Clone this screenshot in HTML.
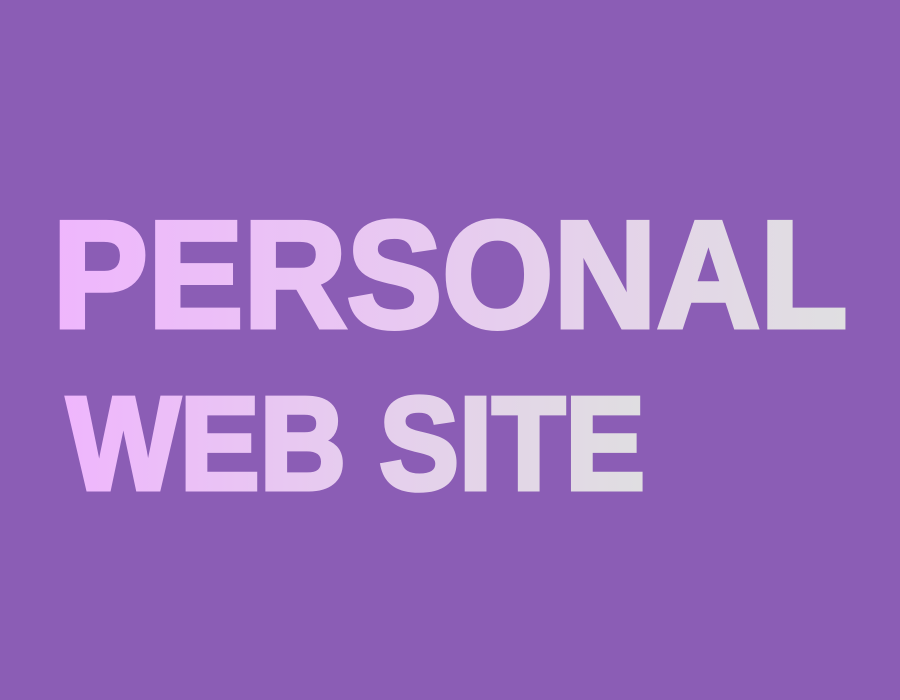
<!DOCTYPE html>
<html><head><style>
html,body{margin:0;padding:0;}
body{width:900px;height:700px;background:#8b5db5;overflow:hidden;}
svg{display:block;}
text{font-family:"Liberation Sans",sans-serif;font-weight:bold;}
</style></head><body>
<svg width="900" height="700" viewBox="0 0 900 700">
<defs>
<linearGradient id="g" gradientUnits="userSpaceOnUse" x1="50" y1="0" x2="845" y2="0">
<stop offset="0" stop-color="#efb6fd"/>
<stop offset="0.45" stop-color="#e8c9f1"/>
<stop offset="1" stop-color="#e0dfe1"/>
</linearGradient>
<linearGradient id="g2" gradientUnits="userSpaceOnUse" x1="65" y1="0" x2="642" y2="0">
<stop offset="0" stop-color="#efb6fd"/>
<stop offset="0.5" stop-color="#e6cdee"/>
<stop offset="1" stop-color="#e0dee1"/>
</linearGradient>
</defs>
<text x="52.5" y="327" font-size="152" fill="url(#g)" stroke="url(#g)" stroke-width="5" stroke-linejoin="miter" textLength="795" lengthAdjust="spacingAndGlyphs">PERSONAL</text>
<text x="67" y="489" font-size="132" fill="url(#g2)" stroke="url(#g2)" stroke-width="5" stroke-linejoin="miter" textLength="578" lengthAdjust="spacingAndGlyphs">WEB SITE</text>
</svg>
</body></html>
